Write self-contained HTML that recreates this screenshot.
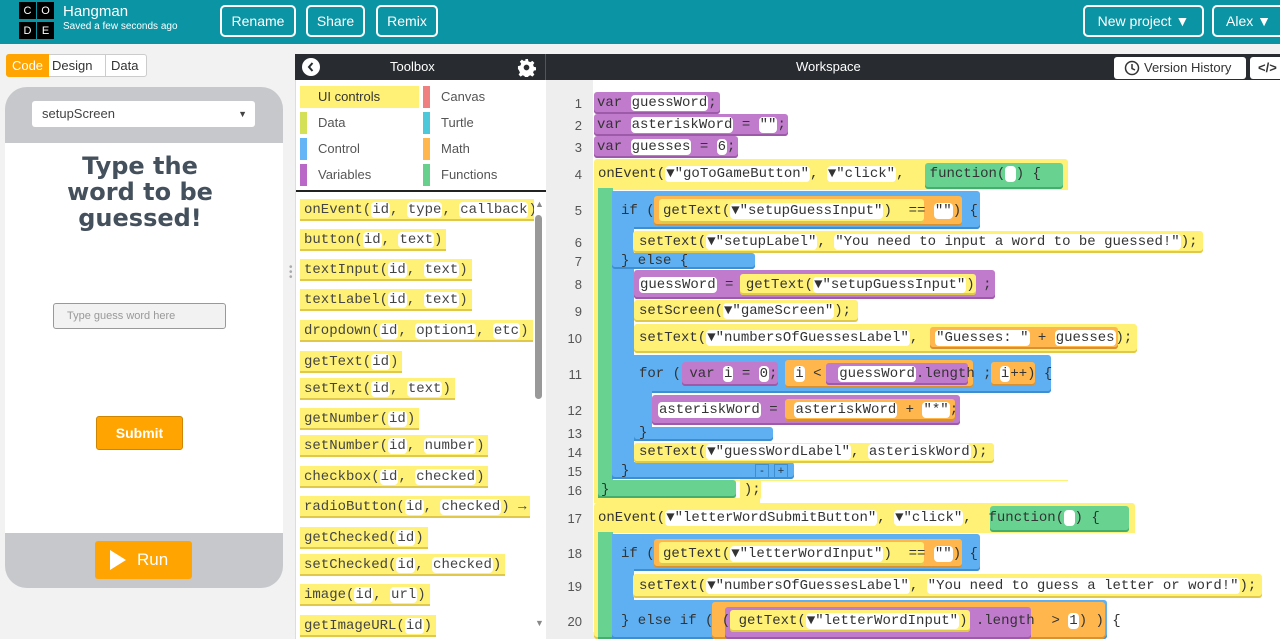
<!DOCTYPE html>
<html><head><meta charset="utf-8">
<style>
*{box-sizing:border-box;margin:0;padding:0}
body{width:1280px;height:639px;overflow:hidden;background:#f2f2f2;font-family:"Liberation Sans",sans-serif;position:relative}
.a{position:absolute}
.hdr{left:0;top:0;width:1280px;height:44px;background:#0a94a4}
.hb{position:absolute;top:5px;height:32px;border:2px solid #fff;border-radius:5px;color:#fff;font-size:14px;display:flex;align-items:center;justify-content:center}
.logo{position:absolute;width:17px;height:17px;background:#000;color:#fff;font-size:11px;display:flex;align-items:center;justify-content:center}
.b{position:absolute;border-radius:3px}
.y{background:#fff176;box-shadow:inset 0 -2px 0 #e0c94a}
.p{background:#c17bcc;box-shadow:inset 0 -2px 0 #9c5aa8}
.bl{background:#5fb0f2;box-shadow:inset 0 -2px 0 #3c8ed0}
.g{background:#68d391;box-shadow:inset 0 -2px 0 #45ae6e}
.o{background:#ffb74d;box-shadow:inset 0 -2px 0 #d99030}
.t{position:absolute;font-family:"Liberation Mono",monospace;font-size:14px;line-height:20px;color:#333;white-space:pre}
.w{background:#fff;border-radius:4px;padding:0 1px}
.ln{position:absolute;left:556px;width:26px;text-align:right;font-size:13px;color:#555}
.tb{position:absolute;left:300px;height:22px;font-family:"Liberation Mono",monospace;font-size:14px;line-height:22px;color:#444;padding:0 4px;white-space:pre}
.cat{position:absolute;font-size:13px;color:#555;height:22px;line-height:22px}
.cat i{position:absolute;left:-18px;top:0;width:7px;height:22px}
</style></head><body>
<div class="a hdr"></div>
<div class="logo" style="left:19px;top:2px">C</div><div class="logo" style="left:37px;top:2px">O</div>
<div class="logo" style="left:19px;top:22px">D</div><div class="logo" style="left:37px;top:22px">E</div>
<div class="a" style="left:63px;top:3px;color:#fff;font-size:15px">Hangman</div>
<div class="a" style="left:63px;top:21px;color:#fff;font-size:10px">Saved a few seconds ago</div>
<div class="hb" style="left:220px;width:76px">Rename</div>
<div class="hb" style="left:306px;width:59px">Share</div>
<div class="hb" style="left:376px;width:62px">Remix</div>
<div class="hb" style="left:1083px;width:121px">New project ▼</div>
<div class="hb" style="left:1212px;width:80px;justify-content:flex-start;padding-left:12px">Alex ▼</div>

<!-- left -->
<div class="a" style="left:6px;top:54px;width:141px;height:23px;border:1px solid #ccc;background:#fff;border-radius:3px"></div>
<div class="a" style="left:6px;top:54px;width:43px;height:23px;background:#ffa400;color:#fff;font-size:13px;line-height:23px;text-align:center;border-radius:3px 0 0 3px">Code</div>
<div class="a" style="left:52px;top:54px;font-size:13px;line-height:23px;color:#333">Design</div>
<div class="a" style="left:105px;top:54px;width:1px;height:23px;background:#ccc"></div>
<div class="a" style="left:111px;top:54px;font-size:13px;line-height:23px;color:#333">Data</div>
<div class="a" style="left:5px;top:87px;width:278px;height:501px;background:#c6c8cb;border-radius:22px"></div>
<div class="a" style="left:32px;top:101px;width:223px;height:26px;background:#fff;border-radius:3px;font-size:13px;color:#444;line-height:26px;padding-left:10px">setupScreen<span style="position:absolute;right:8px;font-size:9px">▼</span></div>
<div class="a" style="left:5px;top:143px;width:278px;height:390px;background:#fff"></div>
<div class="a" style="left:5px;top:153px;width:270px;text-align:center;font-family:'DejaVu Sans',sans-serif;font-size:24px;font-weight:bold;color:#44505c;line-height:26px">Type the<br>word to be<br>guessed!</div>
<div class="a" style="left:53px;top:303px;width:173px;height:26px;background:#f2f2f2;border:1px solid #999;border-radius:3px;font-size:11px;color:#999;line-height:24px;padding-left:13px">Type guess word here</div>
<div class="a" style="left:96px;top:416px;width:87px;height:34px;background:#ffa400;border:1px solid #d08500;border-radius:3px;color:#fff;font-size:14px;font-weight:bold;text-align:center;line-height:32px">Submit</div>
<div class="a" style="left:95px;top:541px;width:97px;height:38px;background:#ffa400;border-radius:3px;color:#fff;font-size:17px;line-height:38px;padding-left:42px">Run</div>
<svg class="a" style="left:110px;top:550px" width="18" height="20"><path d="M0 0L16 10L0 20Z" fill="#fff"/></svg>
<div class="a" style="left:289px;top:265px;color:#aaa;font-size:10px;line-height:5px">•<br>•<br>•</div>

<!-- toolbox -->
<div class="a" style="left:295px;top:54px;width:251px;height:585px;background:#fff;border-left:1px solid #ddd"></div>
<div class="a" style="left:295px;top:54px;width:985px;height:26px;background:#282c30"></div>
<div class="a" style="left:545px;top:54px;width:1px;height:26px;background:#555"></div>
<svg class="a" style="left:302px;top:58px" width="18" height="18"><circle cx="9" cy="9" r="9" fill="#fff"/><path d="M10.5 5L7 9l3.5 4" stroke="#282c30" stroke-width="2" fill="none"/></svg>
<div class="a" style="left:390px;top:54px;color:#fff;font-size:13px;line-height:26px">Toolbox</div>
<svg class="a" style="left:517px;top:58px" width="19" height="19" viewBox="0 0 20 20"><path fill="#fff" d="M8.5 1h3l.5 2.5 2 .9 2.2-1.4 2.1 2.1-1.4 2.2.9 2 2.5.5v3l-2.5.5-.9 2 1.4 2.2-2.1 2.1-2.2-1.4-2 .9-.5 2.5h-3l-.5-2.5-2-.9-2.2 1.4-2.1-2.1 1.4-2.2-.9-2L1 11.5v-3l2.5-.5.9-2L3 3.8 5.1 1.7 7.3 3.1l2-.9z"/><circle cx="10" cy="10" r="3" fill="#282c30"/></svg>
<div class="a" style="left:300px;top:86px;width:119px;height:22px;background:#fff176"></div>
<div class="cat" style="left:318px;top:86px;color:#333">UI controls</div>
<div class="cat" style="left:318px;top:112px"><i style="background:#d4e157"></i>Data</div>
<div class="cat" style="left:318px;top:138px"><i style="background:#64b5f6"></i>Control</div>
<div class="cat" style="left:318px;top:164px"><i style="background:#ba68c8"></i>Variables</div>
<div class="cat" style="left:441px;top:86px"><i style="background:#f07f7f"></i>Canvas</div>
<div class="cat" style="left:441px;top:112px"><i style="background:#4dc7da"></i>Turtle</div>
<div class="cat" style="left:441px;top:138px"><i style="background:#ffb74d"></i>Math</div>
<div class="cat" style="left:441px;top:164px"><i style="background:#66d08c"></i>Functions</div>
<div class="a" style="left:296px;top:190px;width:250px;height:2px;background:#222"></div>
<div class="tb y" style="top:199px">onEvent(<span class="w">id</span>, <span class="w">type</span>, <span class="w">callback</span>)</div>
<div class="tb y" style="top:229px">button(<span class="w">id</span>, <span class="w">text</span>)</div>
<div class="tb y" style="top:259px">textInput(<span class="w">id</span>, <span class="w">text</span>)</div>
<div class="tb y" style="top:289px">textLabel(<span class="w">id</span>, <span class="w">text</span>)</div>
<div class="tb y" style="top:320px">dropdown(<span class="w">id</span>, <span class="w">option1</span>, <span class="w">etc</span>)</div>
<div class="tb y" style="top:351px">getText(<span class="w">id</span>)</div>
<div class="tb y" style="top:378px">setText(<span class="w">id</span>, <span class="w">text</span>)</div>
<div class="tb y" style="top:408px">getNumber(<span class="w">id</span>)</div>
<div class="tb y" style="top:435px">setNumber(<span class="w">id</span>, <span class="w">number</span>)</div>
<div class="tb y" style="top:466px">checkbox(<span class="w">id</span>, <span class="w">checked</span>)</div>
<div class="tb y" style="top:496px">radioButton(<span class="w">id</span>, <span class="w">checked</span>) →</div>
<div class="tb y" style="top:527px">getChecked(<span class="w">id</span>)</div>
<div class="tb y" style="top:554px">setChecked(<span class="w">id</span>, <span class="w">checked</span>)</div>
<div class="tb y" style="top:584px">image(<span class="w">id</span>, <span class="w">url</span>)</div>
<div class="tb y" style="top:615px">getImageURL(<span class="w">id</span>)</div>
<div class="a" style="left:534px;top:193px;width:12px;height:446px;background:#fff"></div>
<div class="a" style="left:535px;top:199px;font-size:9px;color:#888">▲</div>
<div class="a" style="left:535px;top:215px;width:7px;height:184px;background:#999;border-radius:4px"></div>
<div class="a" style="left:535px;top:618px;font-size:9px;color:#888">▼</div>

<!-- workspace -->
<div class="a" style="left:546px;top:80px;width:734px;height:559px;background:#fff"></div>
<div class="a" style="left:546px;top:80px;width:47px;height:559px;background:#eee"></div>
<div class="a" style="left:796px;top:54px;color:#fff;font-size:13px;line-height:26px">Workspace</div>
<div class="a" style="left:1114px;top:57px;width:132px;height:22px;background:#fff;border-radius:3px;font-size:13px;color:#333;line-height:22px;padding-left:30px">Version History</div>
<svg class="a" style="left:1124px;top:60px" width="16" height="16"><circle cx="8" cy="8" r="6.5" stroke="#333" stroke-width="1.5" fill="none"/><path d="M8 4v4.5l3 1.5" stroke="#333" stroke-width="1.5" fill="none"/></svg>
<div class="a" style="left:1250px;top:57px;width:40px;height:22px;background:#fff;border-radius:3px;font-size:13px;color:#333;line-height:22px;padding-left:8px;font-weight:bold">&lt;/&gt;</div>
<div class="a" style="left:546px;top:632px;width:734px;height:7px;background:#eee"></div>

<div class="ln" style="top:96px">1</div><div class="ln" style="top:118px">2</div><div class="ln" style="top:140px">3</div>
<div class="ln" style="top:167px">4</div><div class="ln" style="top:203px">5</div><div class="ln" style="top:235px">6</div>
<div class="ln" style="top:254px">7</div><div class="ln" style="top:277px">8</div><div class="ln" style="top:304px">9</div>
<div class="ln" style="top:331px">10</div><div class="ln" style="top:367px">11</div><div class="ln" style="top:403px">12</div>
<div class="ln" style="top:426px">13</div><div class="ln" style="top:445px">14</div><div class="ln" style="top:464px">15</div>
<div class="ln" style="top:483px">16</div><div class="ln" style="top:511px">17</div><div class="ln" style="top:546px">18</div>
<div class="ln" style="top:579px">19</div><div class="ln" style="top:614px">20</div>

<!-- first event -->
<div class="b y" style="left:594px;top:159px;width:474px;height:344px;background:#fff176"></div>
<div class="b g" style="left:598px;top:188px;width:15px;height:310px;border-radius:0"></div>
<div class="b g" style="left:598px;top:480px;width:138px;height:18px"></div>
<div class="a" style="left:613px;top:190px;width:455px;height:290px;background:#fff"></div>
<div class="a" style="left:736px;top:481px;width:340px;height:22px;background:#fff"></div>
<div class="a" style="left:594px;top:498px;width:166px;height:5px;background:#fff176"></div>
<div class="a" style="left:740px;top:478px;width:21px;height:22px;background:#fff176;border-radius:0 3px 3px 0"></div>
<div class="b g" style="left:925px;top:163px;width:138px;height:26px"></div>
<div class="b p" style="left:594px;top:92px;width:126px;height:22px"></div>
<div class="b p" style="left:594px;top:114px;width:194px;height:22px"></div>
<div class="b p" style="left:594px;top:136px;width:144px;height:22px"></div>
<div class="b bl" style="left:612px;top:191px;width:368px;height:38px"></div>
<div class="b bl" style="left:612px;top:191px;width:22px;height:288px;border-radius:0"></div>
<div class="b bl" style="left:612px;top:253px;width:143px;height:16px"></div>
<div class="b bl" style="left:612px;top:462px;width:182px;height:17px"></div>
<div class="b o" style="left:654px;top:196px;width:308px;height:30px"></div>
<div class="b y" style="left:659px;top:199px;width:265px;height:24px"></div>
<div class="b y" style="left:633px;top:231px;width:570px;height:22px"></div>
<div class="b p" style="left:634px;top:270px;width:361px;height:29px"></div>
<div class="b y" style="left:740px;top:274px;width:236px;height:21px"></div>
<div class="b y" style="left:634px;top:300px;width:224px;height:22px"></div>
<div class="b y" style="left:634px;top:324px;width:503px;height:29px"></div>
<div class="b o" style="left:930px;top:327px;width:188px;height:22px"></div>
<div class="b bl" style="left:634px;top:355px;width:417px;height:38px"></div>
<div class="b bl" style="left:634px;top:355px;width:18px;height:86px;border-radius:0"></div>
<div class="b bl" style="left:634px;top:427px;width:139px;height:14px"></div>
<div class="b p" style="left:682px;top:362px;width:96px;height:24px"></div>
<div class="b o" style="left:785px;top:360px;width:188px;height:28px"></div>
<div class="b p" style="left:826px;top:363px;width:142px;height:22px"></div>
<div class="b o" style="left:991px;top:362px;width:44px;height:24px"></div>
<div class="b p" style="left:652px;top:395px;width:308px;height:30px"></div>
<div class="b o" style="left:785px;top:399px;width:170px;height:22px"></div>
<div class="b y" style="left:634px;top:443px;width:360px;height:20px"></div>
<div class="a" style="left:755px;top:464px;width:14px;height:14px;border:1px solid #3c8ed0;font-size:11px;line-height:12px;text-align:center;color:#234">-</div>
<div class="a" style="left:774px;top:464px;width:14px;height:14px;border:1px solid #3c8ed0;font-size:11px;line-height:12px;text-align:center;color:#234">+</div>

<div class="t" style="left:597px;top:93px">var <span class="w">guessWord</span>;</div>
<div class="t" style="left:597px;top:115px">var <span class="w">asteriskWord</span> = <span class="w">""</span>;</div>
<div class="t" style="left:597px;top:137px">var <span class="w">guesses</span> = <span class="w">6</span>;</div>
<div class="t" style="left:598px;top:164px">onEvent(<span class="w">▼"goToGameButton"</span>, <span class="w">▼"click"</span>,   function(<span class="w"> </span>) {</div>
<div class="t" style="left:621px;top:201px">if ( getText(<span class="w">▼"setupGuessInput"</span>)  == <span class="w">""</span>) {</div>
<div class="t" style="left:639px;top:232px">setText(<span class="w">▼"setupLabel"</span>, <span class="w">"You need to input a word to be guessed!"</span>);</div>
<div class="t" style="left:621px;top:251px">} else {</div>
<div class="t" style="left:639px;top:275px"><span class="w">guessWord</span> = <span style="padding-left:4px">getText(<span class="w">▼"setupGuessInput"</span>)</span> ;</div>
<div class="t" style="left:639px;top:301px">setScreen(<span class="w">▼"gameScreen"</span>);</div>
<div class="t" style="left:639px;top:328px">setText(<span class="w">▼"numbersOfGuessesLabel"</span>,  <span class="w">"Guesses: "</span> + <span class="w">guesses</span>);</div>
<div class="t" style="left:639px;top:364px">for ( var <span class="w">i</span> = <span class="w">0</span>;  <span class="w">i</span> <  <span class="w">guessWord</span>.length ; <span class="w">i</span>++) {</div>
<div class="t" style="left:658px;top:400px"><span class="w">asteriskWord</span> =  <span class="w">asteriskWord</span> + <span class="w">"*"</span>;</div>
<div class="t" style="left:639px;top:423px">}</div>
<div class="t" style="left:639px;top:442px">setText(<span class="w">▼"guessWordLabel"</span>, <span class="w">asteriskWord</span>);</div>
<div class="t" style="left:621px;top:461px">}</div>
<div class="t" style="left:601px;top:480px">}                );</div>

<!-- second event -->
<div class="b y" style="left:594px;top:503px;width:541px;height:136px"></div>
<div class="b g" style="left:598px;top:532px;width:15px;height:107px;border-radius:0"></div>
<div class="a" style="left:613px;top:533px;width:670px;height:106px;background:#fff"></div>
<div class="b g" style="left:990px;top:506px;width:139px;height:26px"></div>
<div class="b bl" style="left:612px;top:534px;width:368px;height:37px"></div>
<div class="b bl" style="left:612px;top:534px;width:22px;height:105px;border-radius:0"></div>
<div class="b o" style="left:654px;top:539px;width:308px;height:29px"></div>
<div class="b y" style="left:659px;top:542px;width:265px;height:23px"></div>
<div class="b y" style="left:633px;top:574px;width:629px;height:24px"></div>
<div class="b bl" style="left:612px;top:600px;width:495px;height:39px"></div>
<div class="b o" style="left:712px;top:602px;width:393px;height:37px"></div>
<div class="b p" style="left:725px;top:607px;width:306px;height:32px"></div>
<div class="b y" style="left:730px;top:610px;width:240px;height:22px"></div>
<div class="t" style="left:598px;top:508px">onEvent(<span class="w">▼"letterWordSubmitButton"</span>, <span class="w">▼"click"</span>,  function(<span class="w"> </span>) {</div>
<div class="t" style="left:621px;top:544px">if ( getText(<span class="w">▼"letterWordInput"</span>)  == <span class="w">""</span>) {</div>
<div class="t" style="left:639px;top:576px">setText(<span class="w">▼"numbersOfGuessesLabel"</span>, <span class="w">"You need to guess a letter or word!"</span>);</div>
<div class="t" style="left:621px;top:611px">} else if ( ( getText(<span class="w">▼"letterWordInput"</span>) .length  &gt; <span class="w">1</span>) ) {</div>
</body></html>
